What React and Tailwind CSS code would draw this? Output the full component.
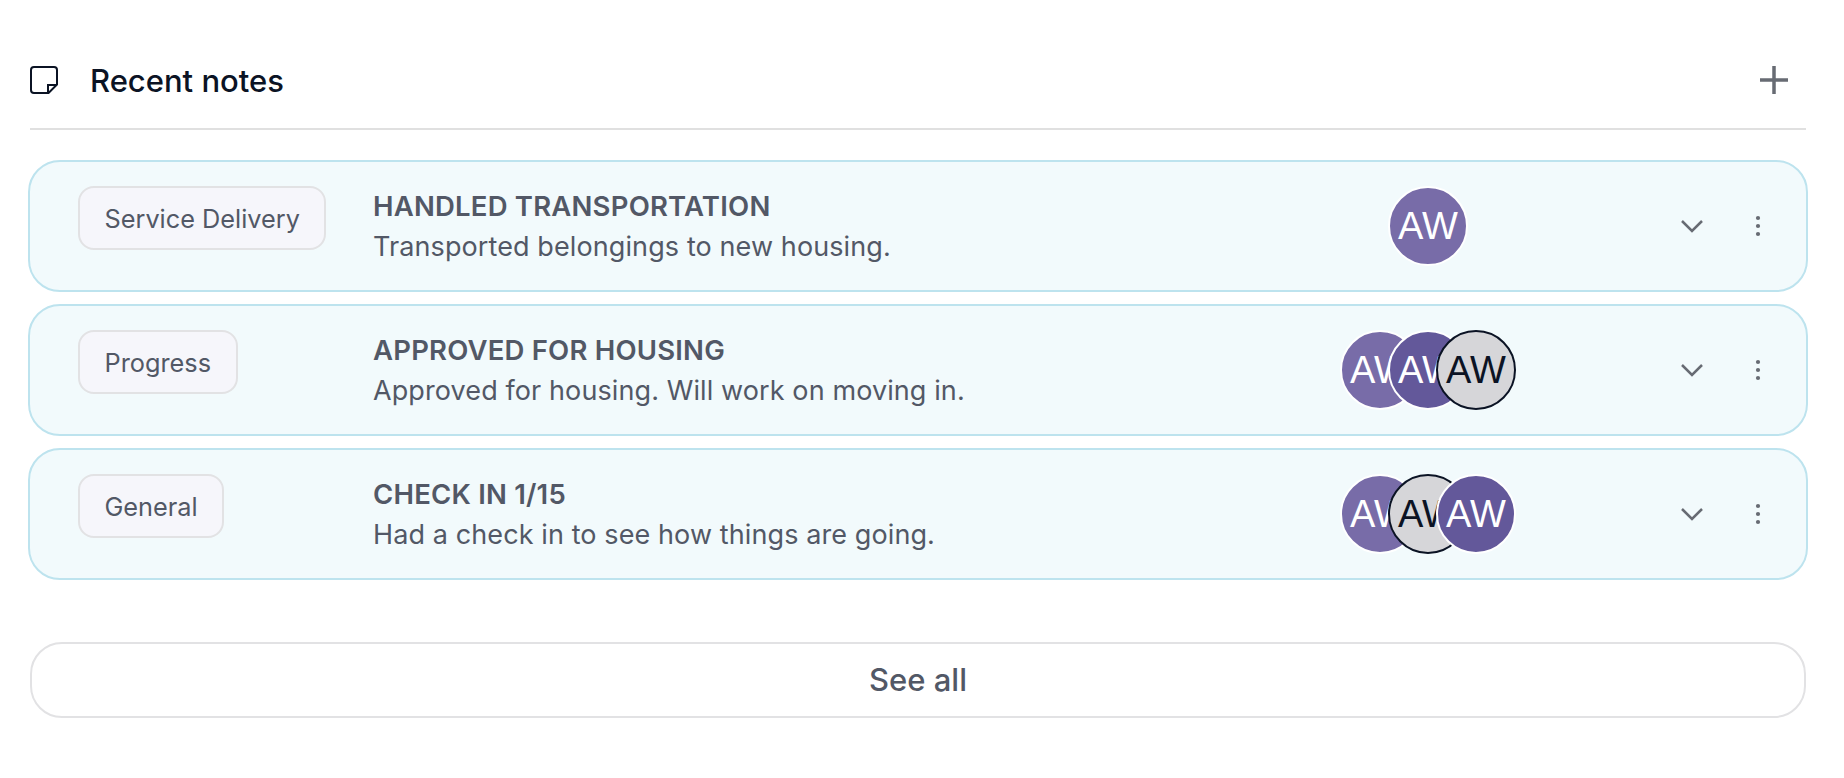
const FONT = "font-['Inter','Liberation_Sans',sans-serif]";

function NoteIcon() {
  return (
    <svg width="28" height="28" viewBox="0 0 28 28" fill="none" stroke="#0b1324" strokeWidth="2" strokeLinejoin="round" className="shrink-0">
      <path d="M4 1h20a3 3 0 0 1 3 3v14.500l-8.500 8.500H4a3 3 0 0 1-3-3V4a3 3 0 0 1 3-3z" />
      <path d="M27 19h-9v8" strokeLinejoin="miter" />
    </svg>
  );
}

function Avatar({ tone, first }) {
  const tones = {
    a: "bg-[#786ca8] text-white border-white",
    b: "bg-[#63589a] text-white border-white",
    c: "bg-[#d6d6d9] text-[#0b1324] border-[#0b1324]",
  };
  return (
    <div className={`size-[80px] border-2 shrink-0 overflow-hidden rounded-full flex items-center justify-center font-['Liberation_Sans',sans-serif] text-[38px] leading-none ${tones[tone]} ${first ? "" : "-ml-[32px]"}`}>
      <span className="whitespace-nowrap">AW</span>
    </div>
  );
}

function Chevron() {
  return (
    <svg width="22" height="14" viewBox="0 0 22 14" fill="none" stroke="#676b73" strokeWidth="2.5">
      <path d="M1 2l10 10L21 2" />
    </svg>
  );
}

function Dots() {
  return (
    <svg width="6" height="22" viewBox="0 0 6 22" fill="#676b73">
      <circle cx="3" cy="3" r="2.1" />
      <circle cx="3" cy="11" r="2.1" />
      <circle cx="3" cy="19" r="2.1" />
    </svg>
  );
}

function Note({ tag, title, body, avatars }) {
  return (
    <div className="h-[132px] rounded-[32px] border-2 border-[#bde3ee] bg-[#f2fafc] flex items-start pl-[48px]">
      <div className="w-[295px] shrink-0 pt-[24px]">
        <span className="inline-flex h-[64px] items-center rounded-[16px] border-2 border-[#e2e2e4] bg-[#f6f6fb] px-[24.5px] pt-[2px] text-[25.3px] text-[#525866]">
          {tag}
        </span>
      </div>
      <div className="w-[960px] shrink-0 pt-[25px]">
        <div className="text-[27.5px] leading-[39px] font-semibold tracking-[0.2px] text-[#525866]">{title}</div>
        <div className="mt-[1px] text-[27px] leading-[39px] tracking-[0.1px] text-[#525866]">{body}</div>
      </div>
      <div className="flex w-[260px] shrink-0 self-center justify-center -ml-[35px]">
        {avatars.map((t, i) => (
          <Avatar key={i} tone={t} first={i === 0} />
        ))}
      </div>
      <div className="ml-auto flex self-center items-center pr-[45px]">
        <Chevron />
        <div className="ml-[52px]"><Dots /></div>
      </div>
    </div>
  );
}

export default function App() {
  return (
    <div className={`${FONT} min-h-[778px] bg-white pl-[28px] pr-[36px] pt-[62px]`}>
      <div className="mx-[2px] flex h-[68px] items-start border-b-2 border-[#e0e0e0]">
        <div className="mt-[4px]"><NoteIcon /></div>
        <h2 className="ml-[32px] pt-[1px] text-[31px] leading-[36px] font-medium text-[#0b1324]">Recent notes</h2>
        <svg width="30" height="30" viewBox="0 0 30 30" stroke="#676b73" strokeWidth="3.5" className="ml-auto mt-[3px] mr-[17px]">
          <path d="M15 1v28M1 15h28" />
        </svg>
      </div>
      <div className="mt-[30px] flex flex-col gap-[12px]">
        <Note tag="Service Delivery" title="HANDLED TRANSPORTATION" body="Transported belongings to new housing." avatars={["a"]} />
        <Note tag="Progress" title="APPROVED FOR HOUSING" body="Approved for housing. Will work on moving in." avatars={["a", "b", "c"]} />
        <Note tag="General" title="CHECK IN 1/15" body="Had a check in to see how things are going." avatars={["a", "c", "b"]} />
      </div>
      <button className="mx-[2px] mt-[62px] flex h-[76px] w-[1776px] items-center justify-center rounded-[32px] border-2 border-[#e2e2e4] bg-white pt-[1px] text-[31px] font-medium text-[#525866]">
        See all
      </button>
    </div>
  );
}
